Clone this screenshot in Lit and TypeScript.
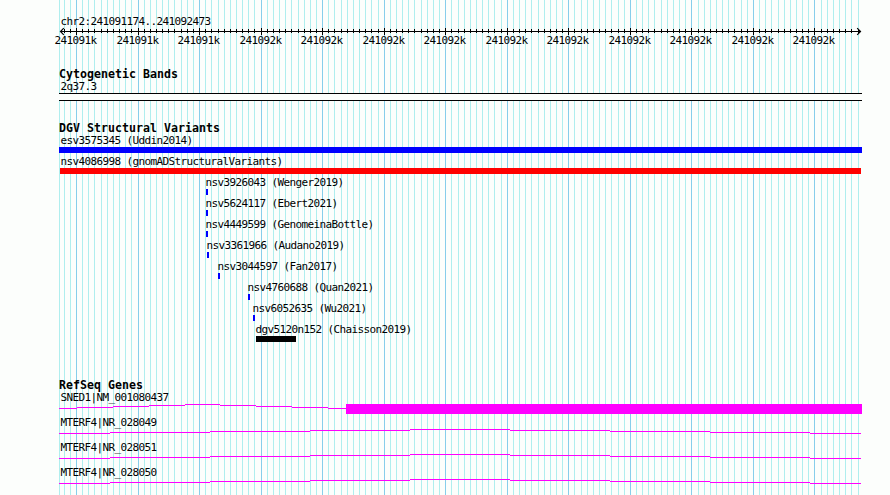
import { LitElement, html, svg, css } from "lit";
import { customElement, property } from "lit/decorators.js";

const WIDTH = 803;
const STEP = 80 / 13;
// Left edge of the panel on the page; ruler positions are computed in page pixels.
const LEFT = 59;

const ticks = Array.from({ length: 131 }, (_, i) => {
  const k = i - 33;
  return {
    x: Math.max(0, Math.floor(261.08 + k * STEP) - LEFT),
    major: ((k % 10) + 10) % 10 === 0,
  };
});

const majors = ticks.filter((t) => t.major);

interface Variant {
  label: string;
  indent: number;
  start: number;
  width: number;
  color: string;
}

const variants: Variant[] = [
  { label: "esv3575345 (Uddin2014)", indent: 1, start: 0, width: 803, color: "#0000ff" },
  { label: "nsv4086998 (gnomADStructuralVariants)", indent: 1, start: 1, width: 801, color: "#ff0000" },
  { label: "nsv3926043 (Wenger2019)", indent: 146, start: 147, width: 2, color: "#0000ff" },
  { label: "nsv5624117 (Ebert2021)", indent: 146, start: 147, width: 2, color: "#0000ff" },
  { label: "nsv4449599 (GenomeinaBottle)", indent: 146, start: 147, width: 2, color: "#0000ff" },
  { label: "nsv3361966 (Audano2019)", indent: 147, start: 148, width: 2, color: "#0000ff" },
  { label: "nsv3044597 (Fan2017)", indent: 158, start: 159, width: 2, color: "#0000ff" },
  { label: "nsv4760688 (Quan2021)", indent: 188, start: 189, width: 2, color: "#0000ff" },
  { label: "nsv6052635 (Wu2021)", indent: 193, start: 194, width: 2, color: "#0000ff" },
  { label: "dgv5120n152 (Chaisson2019)", indent: 196, start: 197, width: 40, color: "#000000" },
];

interface Gene {
  label: string;
  // Boundaries of the stepped intron line, rising to the middle and falling again.
  bounds: number[];
  exon?: [number, number];
}

const longIntron = [0, 51, 151, 251, 351, 451, 551, 651, 751, 802];

const genes: Gene[] = [
  { label: "SNED1|NM_001080437", bounds: [0, 18, 54, 90, 126, 161, 197, 233, 269, 287], exon: [287, 516] },
  { label: "MTERF4|NR_028049", bounds: longIntron },
  { label: "MTERF4|NR_028051", bounds: longIntron },
  { label: "MTERF4|NR_028050", bounds: longIntron },
];

@customElement("track-section")
class TrackSection extends LitElement {
  @property() heading = "";

  static styles = css`
    :host { display: block; }
    .heading {
      font: bold 11.6px/13px "DejaVu Sans Mono", monospace;
      letter-spacing: 0.016px;
      height: 12px;
      white-space: pre;
    }
  `;

  render() {
    return html`<div class="heading">${this.heading}</div><slot></slot>`;
  }
}

@customElement("app-root")
class AppRoot extends LitElement {
  static styles = css`
    :host {
      display: block;
      position: relative;
      box-sizing: border-box;
      width: 890px;
      height: 495px;
      overflow: hidden;
      padding: 15px 28px 0 59px;
      background: #fcfefc;
      color: #000;
      font: 11px/13px "DejaVu Sans Mono", monospace;
      letter-spacing: -0.622px;
    }
    svg { display: block; shape-rendering: crispEdges; overflow: visible; }
    .grid { position: absolute; left: 59px; top: 0; }
    .minor { fill: #afeeee; }
    .major { fill: #87ceeb; }
    .panel { position: relative; }
    .label { height: 13px; white-space: pre; padding-left: 0.5px; }
    .label.first { padding-left: 1.5px; }
    .arrow { fill: none; stroke: #000; stroke-width: 1.2; shape-rendering: auto; }
    .cyto { margin-top: 33px; }
    .band {
      height: 6px;
      border: solid #000;
      border-width: 1px 0;
      background: #fcfefc;
    }
    .dgv { margin-top: 21px; }
    .row { height: 21px; }
    .bar { height: 6px; }
    .refseq { margin-top: 35px; }
    .gene { height: 25px; }
    .magenta { fill: #ff00ff; }
  `;

  private ruler() {
    return html`
      <svg width=${WIDTH} height="7">
        <rect x="1" y="3" width="801" height="1"></rect>
        ${ticks.slice(1).map((t) =>
          t.major
            ? svg`<rect x=${t.x} y="0" width="1" height="7"></rect>`
            : svg`<rect x=${t.x} y="1" width="1" height="4"></rect>`
        )}
        <path class="arrow" d="M4.8 .2L1.5 3.5L4.8 6.8M798.2 .2L801.5 3.5L798.2 6.8"></path>
        ${majors.map((t) => svg`<text x=${t.x - 21.5} y="16">${t.x < 160 ? "241091k" : "241092k"}</text>`)}
      </svg>
    `;
  }

  private gene(g: Gene) {
    return html`
      <div class="gene">
        <div class="label first">${g.label}</div>
        <svg class="magenta" width=${WIDTH} height="10">
          ${g.bounds.slice(1).map(
            (end, i) =>
              svg`<rect x=${g.bounds[i]} y=${Math.abs(4 - i)} width=${end - g.bounds[i]} height="1"></rect>`
          )}
          ${g.exon ? svg`<rect x=${g.exon[0]} y="0" width=${g.exon[1]} height="10"></rect>` : null}
        </svg>
      </div>
    `;
  }

  render() {
    return html`
      <svg class="grid" width=${WIDTH} height="495">
        ${ticks.map((t) => svg`<rect class=${t.major ? "major" : "minor"} x=${t.x} y="0" width="1" height="495"></rect>`)}
      </svg>
      <div class="panel">
        <div class="label first">chr2:241091174..241092473</div>
        ${this.ruler()}
        <track-section class="cyto" heading="Cytogenetic Bands">
          <div class="label first">2q37.3</div>
          <div class="band"></div>
        </track-section>
        <track-section class="dgv" heading="DGV Structural Variants">
          ${variants.map(
            (v) => html`
              <div class="row">
                <div class="label" style="margin-left:${v.indent}px">${v.label}</div>
                <div class="bar" style="margin-left:${v.start}px;width:${v.width}px;background:${v.color}"></div>
              </div>
            `
          )}
        </track-section>
        <track-section class="refseq" heading="RefSeq Genes">
          ${genes.map((g) => this.gene(g))}
        </track-section>
      </div>
    `;
  }
}
